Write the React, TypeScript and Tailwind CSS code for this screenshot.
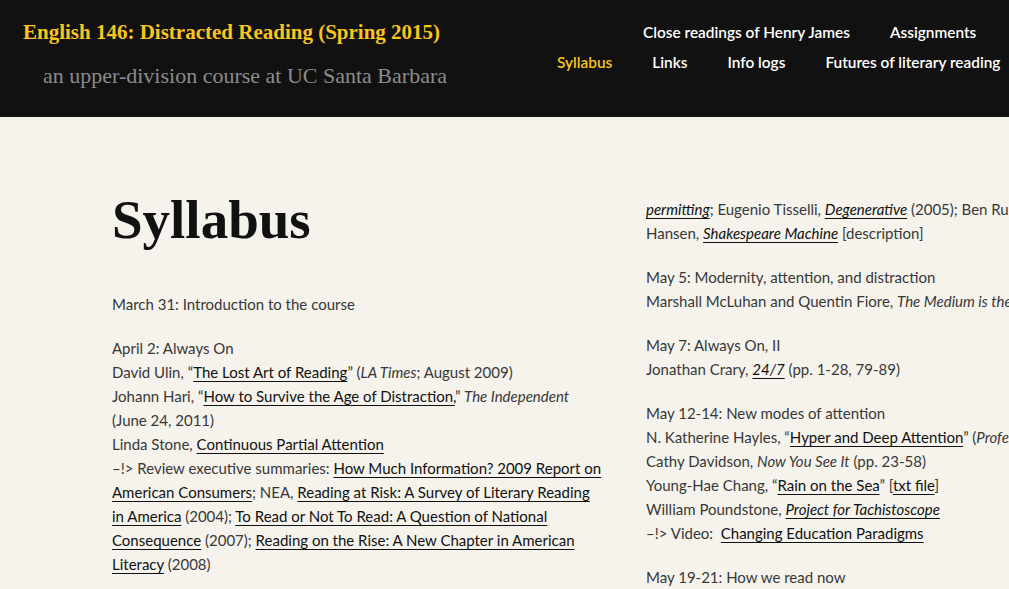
const sans = "font-['Lato','Liberation_Sans',sans-serif]";
const serif = "font-['Liberation_Serif','DejaVu_Serif',serif]";

function A({ children, italic }: { children: React.ReactNode; italic?: boolean }) {
  return (
    <a href="#" className={`text-[#111] underline underline-offset-[3px] decoration-1 ${italic ? "italic" : ""}`}>
      {children}
    </a>
  );
}

export default function App() {
  return (
    <div className={`min-h-screen w-full overflow-hidden bg-[#f5f3ec] ${sans}`}>
      {/* Header */}
      <header className="flex h-[117px] w-full bg-[#111111]">
        <div className="shrink-0 pl-[23px] pt-[20px]">
          <h1 className={`${serif} text-[21px] font-bold leading-[24px] text-[#f8c51c]`}>
            English 146: Distracted Reading (Spring 2015)
          </h1>
          <p className={`${serif} mt-[20px] pl-[20px] text-[22px] leading-[24px] text-[#8c8c8c]`}>
            an upper-division course at UC Santa Barbara
          </p>
        </div>
        <nav className="ml-auto w-[452px] shrink-0 whitespace-nowrap pt-[20px] text-[15.4px] font-semibold leading-[24px] text-white">
          <div className="flex gap-10 pl-[86px]">
            <a href="#">Close readings of Henry James</a>
            <a href="#">Assignments</a>
          </div>
          <div className="mt-[6px] flex gap-10">
            <a href="#" className="text-[#f8c51c]">Syllabus</a>
            <a href="#">Links</a>
            <a href="#">Info logs</a>
            <a href="#">Futures of literary reading</a>
          </div>
        </nav>
      </header>

      {/* Content */}
      <main className="flex gap-[44px] pl-[112px] pt-[76px] text-[15px] leading-[24px] text-[#383838]">
        <div className="w-[490px] shrink-0 whitespace-nowrap">
          <h2 className={`${serif} text-[55px] font-bold leading-[54px] text-[#111]`}>Syllabus</h2>
          <p className="mt-[45px]">March 31: Introduction to the course</p>
          <p className="mt-[20px]">
            April 2: Always On
            <br />
            David Ulin, “<A>The Lost Art of Reading</A>” (<i>LA Times</i>; August 2009)
            <br />
            Johann Hari, “<A>How to Survive the Age of Distraction,</A>” <i>The Independent</i>
            <br />
            (June 24, 2011)
            <br />
            Linda Stone, <A>Continuous Partial Attention</A>
            <br />
            –!&gt; Review executive summaries: <A>How Much Information? 2009 Report on</A>
            <br />
            <A>American Consumers</A>; NEA, <A>Reading at Risk: A Survey of Literary Reading</A>
            <br />
            <A>in America</A> (2004); <A>To Read or Not To Read: A Question of National</A>
            <br />
            <A>Consequence</A> (2007); <A>Reading on the Rise: A New Chapter in American</A>
            <br />
            <A>Literacy</A> (2008)
          </p>
        </div>

        <div className="w-[490px] shrink-0 whitespace-nowrap pt-[4px]">
          <p>
            <A italic>permitting</A>; Eugenio Tisselli, <A italic>Degenerative</A> (2005); Ben Rubin and Mark
            <br />
            Hansen, <A italic>Shakespeare Machine</A> [description]
          </p>
          <p className="mt-[20px]">
            May 5: Modernity, attention, and distraction
            <br />
            Marshall McLuhan and Quentin Fiore, <i>The Medium is the Massage</i>
          </p>
          <p className="mt-[20px]">
            May 7: Always On, II
            <br />
            Jonathan Crary, <A italic>24/7</A> (pp. 1-28, 79-89)
          </p>
          <p className="mt-[20px]">
            May 12-14: New modes of attention
            <br />
            N. Katherine Hayles, “<A>Hyper and Deep Attention</A>” (<i>Profession</i> 2007)
            <br />
            Cathy Davidson, <i>Now You See It</i> (pp. 23-58)
            <br />
            Young-Hae Chang, “<A>Rain on the Sea</A>” [<A>txt file</A>]
            <br />
            William Poundstone, <A italic>Project for Tachistoscope</A>
            <br />
            –!&gt; Video:&nbsp; <A>Changing Education Paradigms</A>
          </p>
          <p className="mt-[20px]">
            May 19-21: How we read now
            <br />
            Maryanne Wolf, <i>Proust and the Squid</i>
          </p>
        </div>
      </main>
    </div>
  );
}
